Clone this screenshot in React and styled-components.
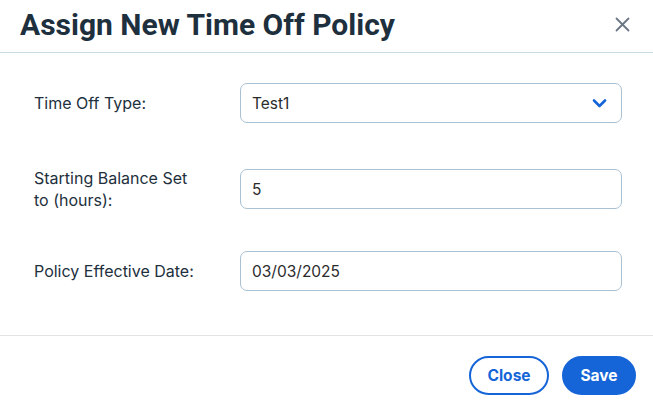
import React from "react";
import styled, { createGlobalStyle } from "styled-components";

const Global = createGlobalStyle`
  html, body { margin: 0; padding: 0; background: #fff; }
  body { font-family: Inter, "Noto Sans", sans-serif; }
  * { box-sizing: border-box; }
`;

const Dialog = styled.div`
  width: 653px;
  height: 402px;
  background: #fff;
  display: flex;
  flex-direction: column;
`;

const Header = styled.div`
  height: 53px;
  display: flex;
  align-items: center;
  justify-content: space-between;
  padding: 0 22px 4px 20px;
  border-bottom: 1px solid #c7dbe6;
`;

const Title = styled.h1`
  margin: 0;
  font-family: Roboto, "Liberation Sans", sans-serif;
  font-weight: 700;
  font-size: 30px;
  color: #1e2f3d;
`;

const CloseIcon = styled.button`
  border: 0;
  background: none;
  padding: 0;
  width: 18px;
  height: 18px;
  display: flex;
  align-items: center;
  justify-content: center;
  cursor: pointer;
`;

const Body = styled.div`
  padding: 30px 31px 44px 34px;
  display: flex;
  flex-direction: column;
  gap: 44px;
  border-bottom: 1px solid #e2e2e2;
`;

const Row = styled.div`
  display: grid;
  grid-template-columns: 206px 1fr;
  align-items: center;
  height: 40px;
`;

const Label = styled.label`
  font-size: 16px;
  line-height: 22px;
  color: #22303d;
  padding-right: 40px;
`;

const Field = styled.div`
  position: relative;
  height: 40px;
  border: 1px solid #a9c1d3;
  border-radius: 7px;
  display: flex;
  align-items: center;
  padding: 0 11px;
  font-size: 15.5px;
  color: #2b2b2b;
`;

const Chevron = styled.svg`
  position: absolute;
  right: 14px;
  top: 50%;
  transform: translateY(-50%);
`;

const Footer = styled.div`
  flex: 1;
  display: flex;
  justify-content: flex-end;
  align-items: flex-start;
  gap: 13px;
  padding: 20px 17px 0 0;
`;

const Button = styled.button`
  height: 39px;
  width: ${(p) => p.$w}px;
  border-radius: 20px;
  font-family: Inter, "Noto Sans", sans-serif;
  font-weight: 700;
  font-size: 15.5px;
  cursor: pointer;
  border: 2px solid #1565d8;
  background: ${(p) => (p.$primary ? "#1565d8" : "#fff")};
  color: ${(p) => (p.$primary ? "#fff" : "#1565d8")};
`;

export default function App() {
  return (
    <>
      <Global />
      <Dialog>
        <Header>
          <Title>Assign New Time Off Policy</Title>
          <CloseIcon aria-label="Close">
            <svg width="15" height="15" viewBox="0 0 15 15">
              <path d="M1.5 1.5 L13.5 13.5 M13.5 1.5 L1.5 13.5" stroke="#6b7684" strokeWidth="1.8" strokeLinecap="round" />
            </svg>
          </CloseIcon>
        </Header>
        <Body>
          <Row>
            <Label>Time Off Type:</Label>
            <Field>
              Test1
              <Chevron width="15" height="10" viewBox="0 0 15 10">
                <path d="M2 2.5 L7.5 8 L13 2.5" fill="none" stroke="#1565d8" strokeWidth="2.6" strokeLinecap="round" strokeLinejoin="round" />
              </Chevron>
            </Field>
          </Row>
          <Row>
            <Label>Starting Balance Set to (hours):</Label>
            <Field>5</Field>
          </Row>
          <Row>
            <Label>Policy Effective Date:</Label>
            <Field>03/03/2025</Field>
          </Row>
        </Body>
        <Footer>
          <Button $w={80}>Close</Button>
          <Button $w={74} $primary>Save</Button>
        </Footer>
      </Dialog>
    </>
  );
}
